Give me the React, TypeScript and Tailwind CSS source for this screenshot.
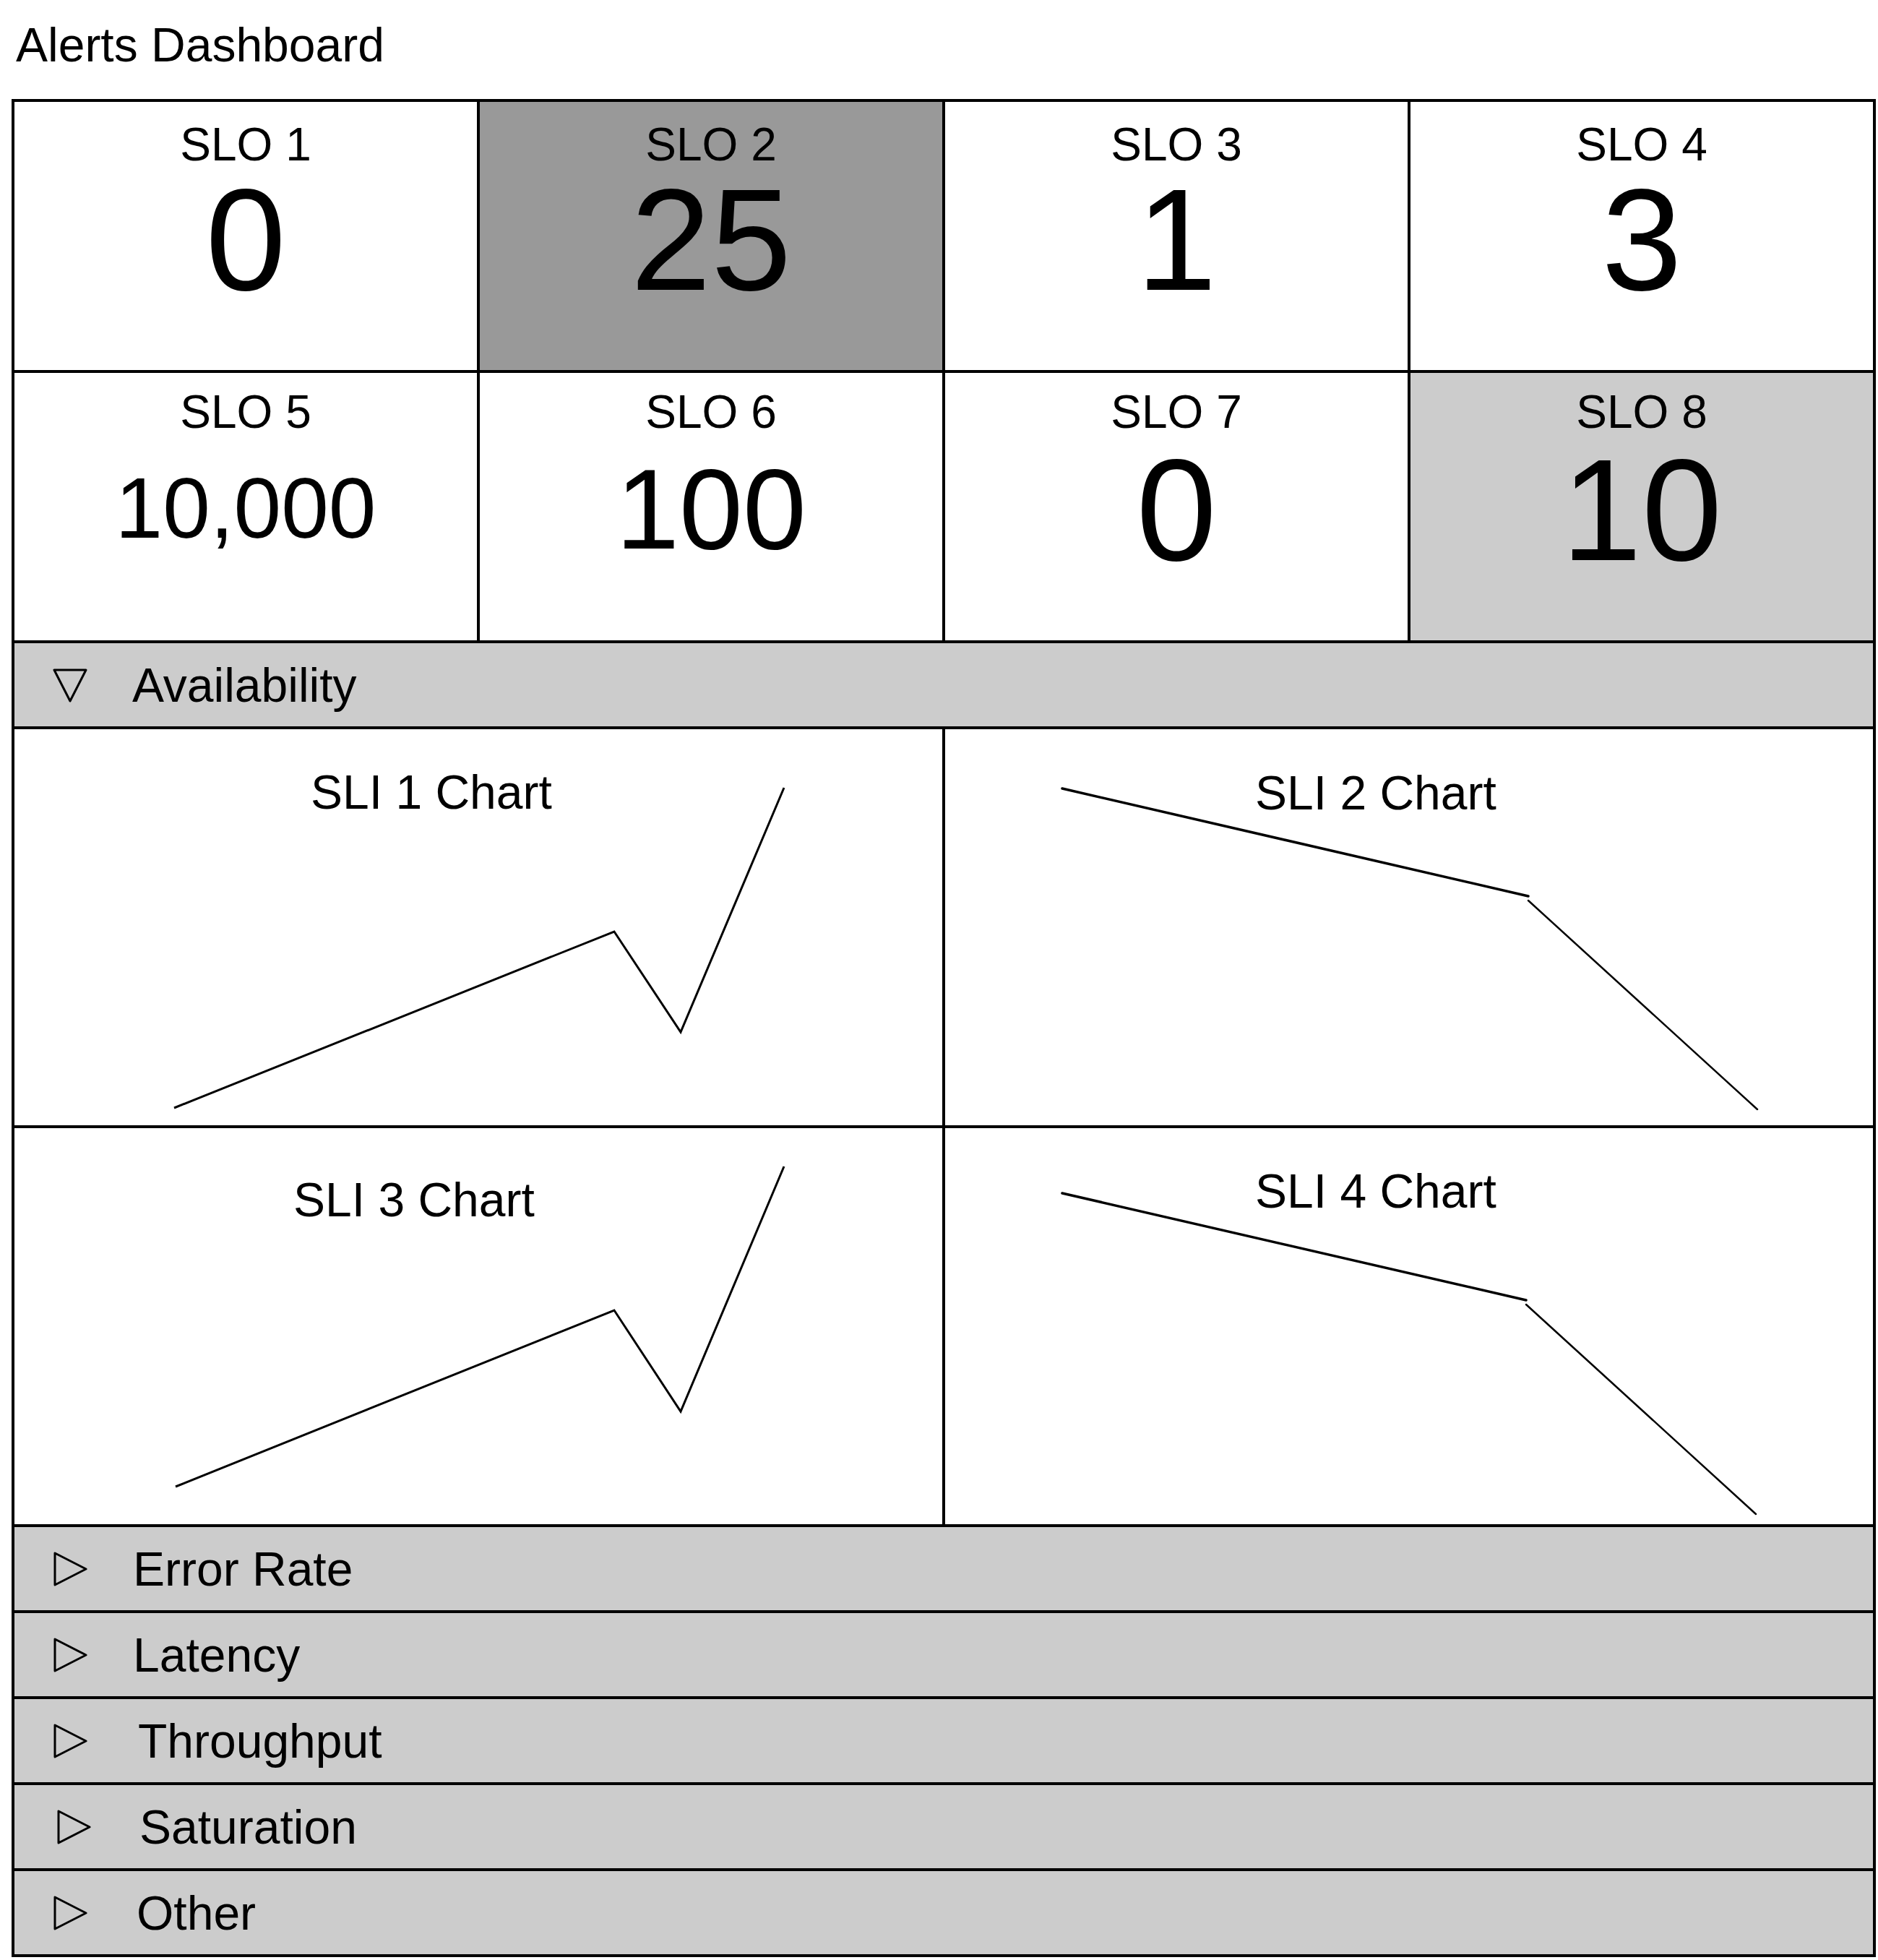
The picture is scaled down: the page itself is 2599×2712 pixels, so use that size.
import React from "react";

interface SloItem {
  name: string;
  value: string;
  bg: string;
  numClass: string;
}

interface ChartItem {
  title: string;
  titlePad: string;
  points: [number, number][];
  kink?: boolean;
}

interface SectionItem {
  name: string;
  open?: boolean;
  iconMl: string;
  textMl: string;
}

const sloRow1: SloItem[] = [
  { name: "SLO 1", value: "0", bg: "bg-white", numClass: "text-[200px] pt-[10px]" },
  { name: "SLO 2", value: "25", bg: "bg-[#999999]", numClass: "text-[200px] pt-[10px]" },
  { name: "SLO 3", value: "1", bg: "bg-white", numClass: "text-[200px] pt-[10px]" },
  { name: "SLO 4", value: "3", bg: "bg-white", numClass: "text-[200px] pt-[10px]" },
];

const sloRow2: SloItem[] = [
  { name: "SLO 5", value: "10,000", bg: "bg-white", numClass: "text-[118px] pt-[5px]" },
  { name: "SLO 6", value: "100", bg: "bg-white", numClass: "text-[158px] pt-[6px]" },
  { name: "SLO 7", value: "0", bg: "bg-white", numClass: "text-[200px] pt-[10px]" },
  { name: "SLO 8", value: "10", bg: "bg-[#cccccc]", numClass: "text-[200px] pt-[10px]" },
];

const charts: ChartItem[] = [
  {
    title: "SLI 1 Chart",
    titlePad: "pl-[410px] pt-[51px]",
    points: [
      [221, 524],
      [830, 280],
      [922, 419],
      [1065, 81],
    ],
  },
  {
    title: "SLI 2 Chart",
    titlePad: "pl-[429px] pt-[52px]",
    kink: true,
    points: [
      [162, 82],
      [807, 231],
      [807, 237],
      [1124, 526],
    ],
  },
  {
    title: "SLI 3 Chart",
    titlePad: "pl-[386px] pt-[63px]",
    points: [
      [223, 496],
      [830, 252],
      [922, 392],
      [1065, 53],
    ],
  },
  {
    title: "SLI 4 Chart",
    titlePad: "pl-[429px] pt-[51px]",
    kink: true,
    points: [
      [162, 90],
      [804, 238],
      [804, 244],
      [1122, 534],
    ],
  },
];

const sections: SectionItem[] = [
  { name: "Error Rate", iconMl: "ml-[53px]", textMl: "ml-[63px]" },
  { name: "Latency", iconMl: "ml-[53px]", textMl: "ml-[63px]" },
  { name: "Throughput", iconMl: "ml-[53px]", textMl: "ml-[70px]" },
  { name: "Saturation", iconMl: "ml-[58px]", textMl: "ml-[67px]" },
  { name: "Other", iconMl: "ml-[53px]", textMl: "ml-[68px]" },
];

function SloCell({ item, labelPad }: { item: SloItem; labelPad: string }) {
  return (
    <div className={`grid place-items-center ${item.bg}`}>
      <div className={`col-start-1 row-start-1 self-start text-[64px] leading-none ${labelPad}`}>
        {item.name}
      </div>
      <div className={`col-start-1 row-start-1 self-center leading-[0.8] ${item.numClass}`}>
        {item.value}
      </div>
    </div>
  );
}

function ChartCell({ chart }: { chart: ChartItem }) {
  const [a, b, c, d] = chart.points;
  return (
    <div className="relative bg-white overflow-hidden">
      <svg className="absolute inset-0 w-full h-full" fill="none" stroke="#000">
        {chart.kink ? (
          <>
            <polyline points={`${a[0]},${a[1]} ${b[0]},${b[1]}`} strokeWidth={3.5} strokeLinecap="round" />
            <polyline points={`${c[0]},${c[1]} ${d[0]},${d[1]}`} strokeWidth={2.5} strokeLinecap="round" />
          </>
        ) : (
          <polyline
            points={chart.points.map((p) => p.join(",")).join(" ")}
            strokeWidth={3}
            strokeLinejoin="miter"
          />
        )}
      </svg>
      <div className={`relative text-[66px] leading-[72px] ${chart.titlePad}`}>{chart.title}</div>
    </div>
  );
}

function SectionHeader({ item }: { item: SectionItem }) {
  return (
    <div className="flex items-center h-[115px] bg-[#cccccc]">
      <svg className={`shrink-0 ${item.iconMl}`} width="48" height="48" viewBox="0 0 48 48" fill="none">
        {item.open ? (
          <polygon points="2,3 46,3 24,46" stroke="#000" strokeWidth={3} strokeLinejoin="round" />
        ) : (
          <polygon points="3,2 3,46 46,24" stroke="#000" strokeWidth={3} strokeLinejoin="round" />
        )}
      </svg>
      <span className={`text-[66px] leading-[72px] ${item.textMl}`}>{item.name}</span>
    </div>
  );
}

export default function App() {
  return (
    <div className="bg-white text-black font-['Liberation_Sans',Arial,sans-serif] pl-[16px]">
      <h1 className="ml-[6px] pt-[26px] text-[66px] leading-[72px] font-normal">Alerts Dashboard</h1>

      <div className="mt-[39px] w-[2580px] bg-black p-[4px] flex flex-col gap-[4px]">
        <div className="grid grid-cols-4 grid-rows-[371px_370px] gap-[4px]">
          {sloRow1.map((s) => (
            <SloCell key={s.name} item={s} labelPad="pt-[27px]" />
          ))}
          {sloRow2.map((s) => (
            <SloCell key={s.name} item={s} labelPad="pt-[22px]" />
          ))}
        </div>

        <SectionHeader item={{ name: "Availability", open: true, iconMl: "ml-[53px]", textMl: "ml-[62px]" }} />

        <div className="grid grid-cols-2 grid-rows-[548px_548px] gap-[4px]">
          {charts.map((c) => (
            <ChartCell key={c.title} chart={c} />
          ))}
        </div>

        {sections.map((s) => (
          <SectionHeader key={s.name} item={s} />
        ))}
      </div>
    </div>
  );
}
